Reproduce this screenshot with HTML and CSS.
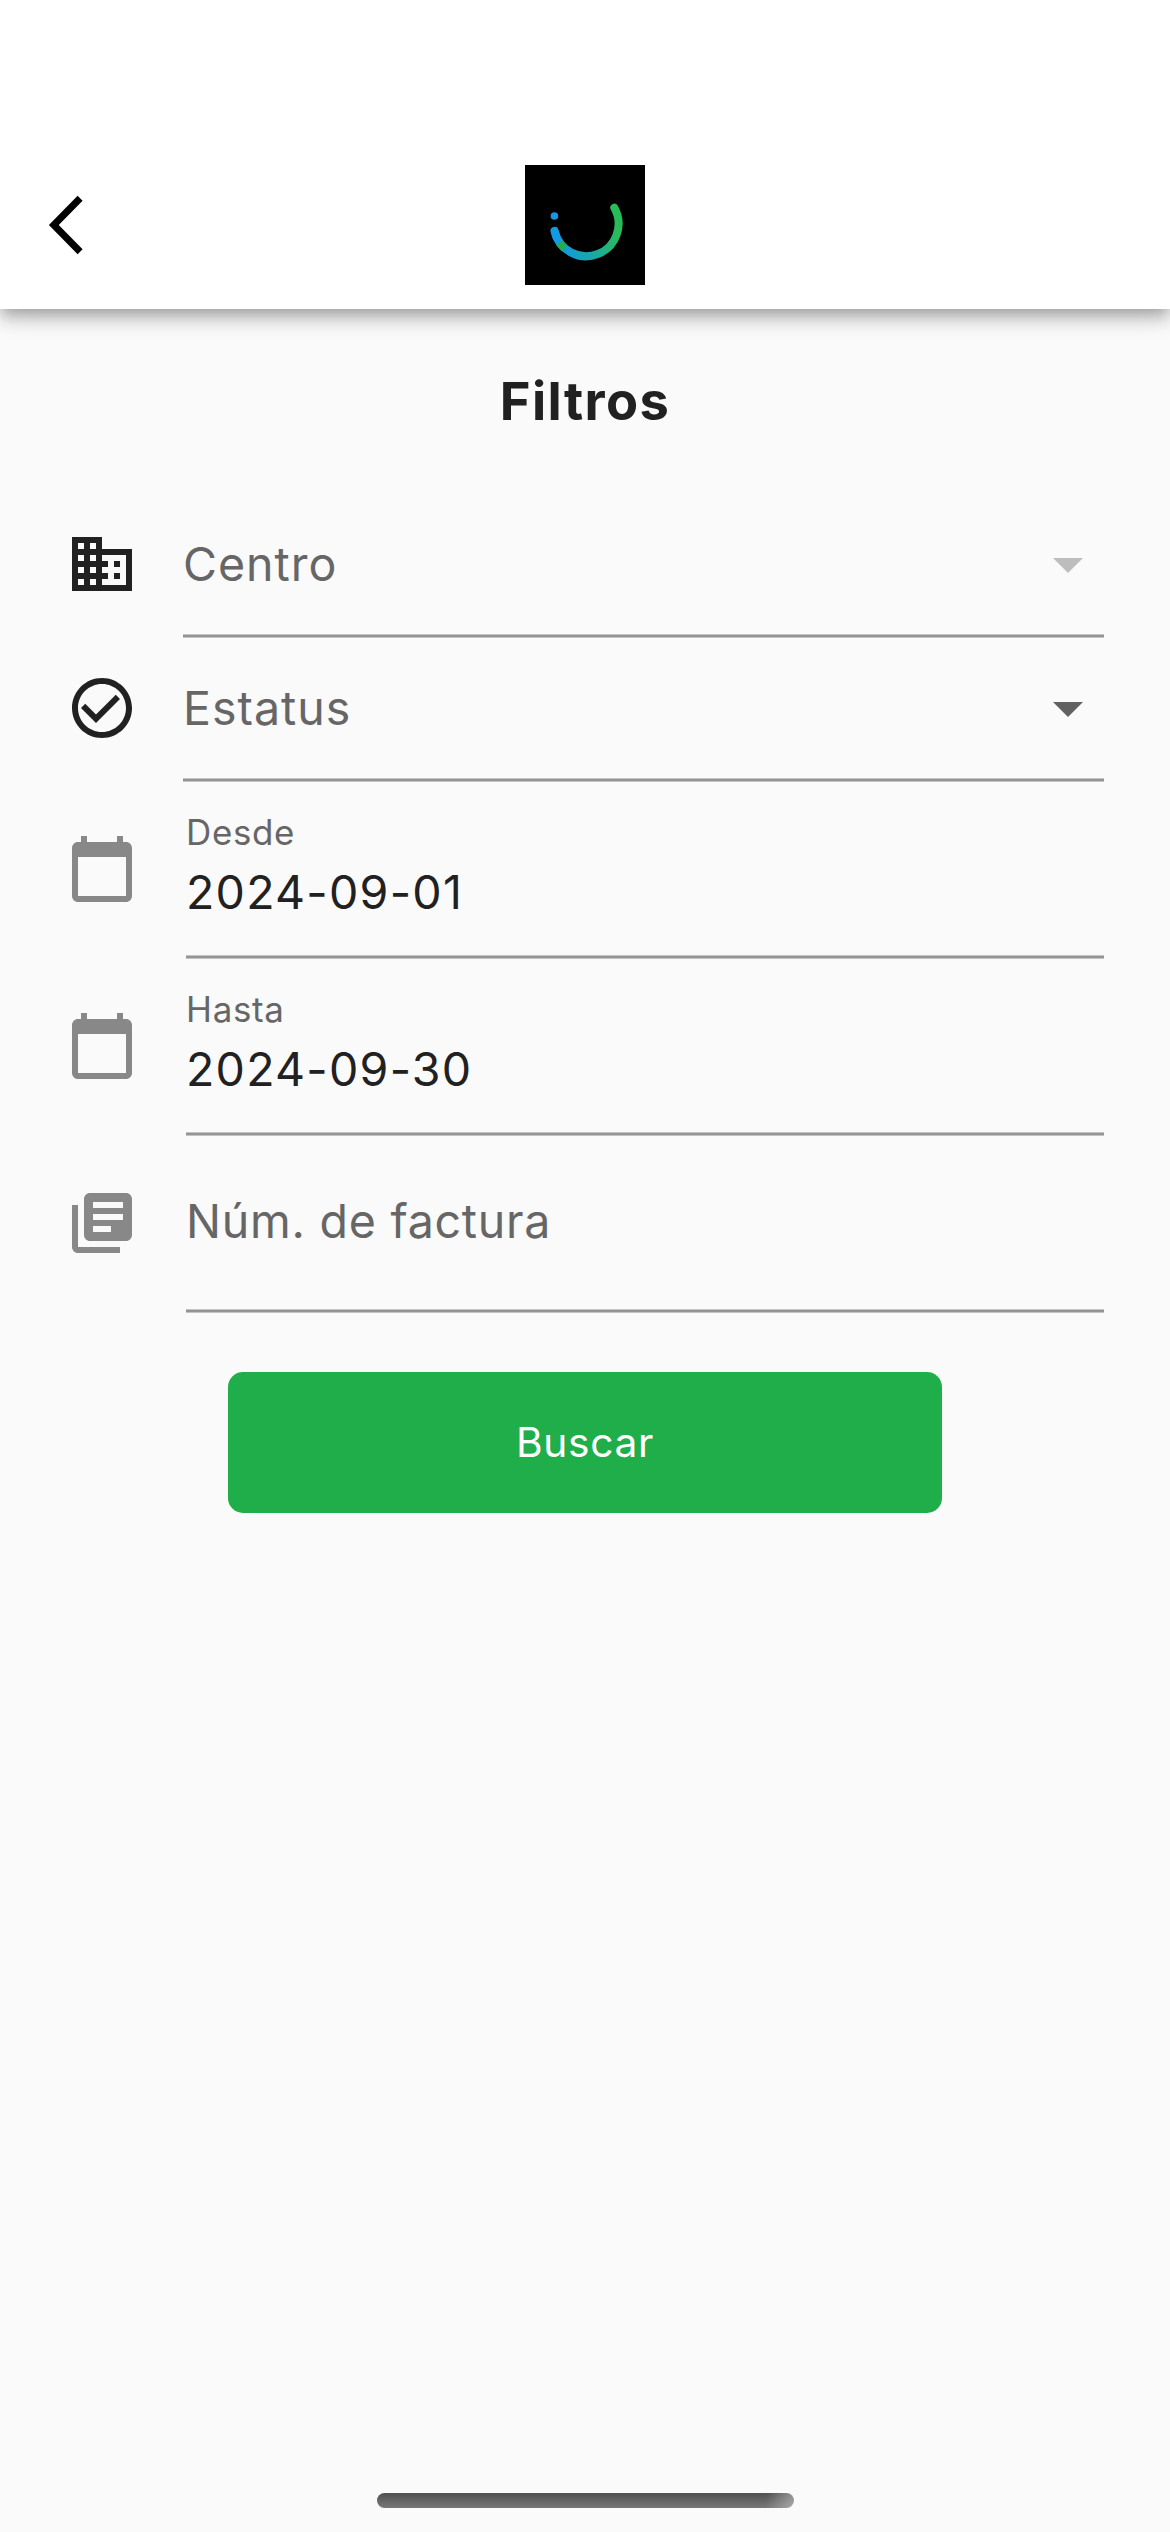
FILE: index.html
```html
<!DOCTYPE html>
<html lang="es">
<head>
<meta charset="utf-8">
<title>Filtros</title>
<link rel="stylesheet" href="styles.css">
</head>
<body>
<div class="screen">
  <header class="appbar">
    <button class="back" aria-label="Atrás">
      <svg width="40" height="64" viewBox="0 0 40 64"><path d="M35.100 5.200 8.800 32l26.300 26.800" fill="none" stroke="#000" stroke-width="7"/></svg>
    </button>
    <svg class="logo" viewBox="0 0 120 120">
      <defs>
        <linearGradient id="arc" gradientUnits="userSpaceOnUse" x1="38" y1="84" x2="93" y2="62">
          <stop offset="0" stop-color="#119bdc"/>
          <stop offset=".42" stop-color="#1aa8a6"/>
          <stop offset=".85" stop-color="#27b865"/>
          <stop offset="1" stop-color="#2abb59"/>
        </linearGradient>
      </defs>
      <rect width="120" height="120" fill="#000"/>
      <g fill="none" stroke-width="8" stroke-linecap="round">
        <path d="M29.500 65.800A32.400 32.400 0 1 0 89.300 42.800" stroke="url(#arc)"/>
        <path d="M29.500 65.800A32.400 32.400 0 0 0 35 78" stroke="#129be4" stroke-linecap="butt"/>
        <path d="M34.700 77.800A32.400 32.400 0 0 0 39.500 83.300" stroke="#24ad4f" stroke-linecap="butt"/>
      </g>
      <circle cx="29.400" cy="51" r="3.800" fill="#1596e6"/>
    </svg>
  </header>

  <main class="content">
    <h1 class="title">Filtros</h1>
    <form class="filters">
      <div class="row">
        <svg class="icon icon-dark" viewBox="0 0 24 24"><path d="M12 7V3H2v18h20V7H12zM6 19H4v-2h2v2zm0-4H4v-2h2v2zm0-4H4V9h2v2zm0-4H4V5h2v2zm4 12H8v-2h2v2zm0-4H8v-2h2v2zm0-4H8V9h2v2zm0-4H8V5h2v2zm10 12h-8v-2h2v-2h-2v-2h2v-2h-2V9h8v10zm-2-8h-2v2h2v-2zm0 4h-2v2h2v-2z"/></svg>
        <div class="field">
          <span class="hint">Centro</span>
          <svg class="caret caret-off" viewBox="0 0 24 24"><path d="M7 10l5 5 5-5z"/></svg>
        </div>
      </div>
      <div class="row">
        <svg class="icon icon-dark" viewBox="0 0 24 24"><path d="M16.59 7.58L10 14.17l-3.59-3.58L5 12l5 5 8-8zM12 2C6.48 2 2 6.48 2 12s4.48 10 10 10 10-4.48 10-10S17.52 2 12 2zm0 18c-4.42 0-8-3.58-8-8s3.58-8 8-8 8 3.58 8 8-3.58 8-8 8z"/></svg>
        <div class="field">
          <span class="hint">Estatus</span>
          <svg class="caret" viewBox="0 0 24 24"><path d="M7 10l5 5 5-5z"/></svg>
        </div>
      </div>
      <div class="row row-tall">
        <svg class="icon" viewBox="0 0 24 24"><path d="M20 3h-1V1h-2v2H7V1H5v2H4c-1.1 0-2 .9-2 2v16c0 1.100.9 2 2 2h16c1.100 0 2-.9 2-2V5c0-1.100-.9-2-2-2zm0 18H4V8h16v13z"/></svg>
        <div class="field">
          <span class="label">Desde</span>
          <span class="value">2024-09-01</span>
        </div>
      </div>
      <div class="row row-tall">
        <svg class="icon" viewBox="0 0 24 24"><path d="M20 3h-1V1h-2v2H7V1H5v2H4c-1.1 0-2 .9-2 2v16c0 1.100.9 2 2 2h16c1.100 0 2-.9 2-2V5c0-1.100-.9-2-2-2zm0 18H4V8h16v13z"/></svg>
        <div class="field">
          <span class="label">Hasta</span>
          <span class="value">2024-09-30</span>
        </div>
      </div>
      <div class="row row-tall">
        <svg class="icon" viewBox="0 0 24 24"><path d="M4 6H2v14c0 1.100.9 2 2 2h14v-2H4V6zm16-4H8c-1.100 0-2 .9-2 2v12c0 1.100.9 2 2 2h12c1.100 0 2-.9 2-2V4c0-1.100-.9-2-2-2zm-1 9H9V9h10v2zm-4 4H9v-2h6v2zm4-8H9V5h10v2z"/></svg>
        <div class="field field-empty">
          <span class="hint hint-long">Núm. de factura</span>
        </div>
      </div>
      <button class="submit" type="button">Buscar</button>
    </form>
  </main>
  <div class="home-indicator"></div>
</div>
</body>
</html>
```
FILE: styles.css
```css
* { box-sizing: border-box; }

body {
  margin: 0;
  background: #fafafa;
  color: #212121;
  font-family: Inter, "Liberation Sans", sans-serif;
}

button { border: 0; padding: 0; font: inherit; }

.screen {
  width: 1170px;
  height: 2532px;
  display: flex;
  flex-direction: column;
  overflow: hidden;
}

.appbar {
  height: 309px;
  padding: 165px 45px 24px;
  display: grid;
  grid-template-columns: 1fr 120px 1fr;
  align-items: center;
  background: #fff;
  box-shadow: 0 6px 12px -3px rgba(0, 0, 0, .2), 0 12px 15px rgba(0, 0, 0, .14), 0 3px 30px rgba(0, 0, 0, .12);
}

.back { width: 40px; height: 64px; background: none; }
.back svg, .logo { display: block; }
.logo { width: 120px; height: 120px; }

.content { flex: 1; padding: 60px 66px 0; }

.title {
  margin: 0 0 61px;
  font-size: 52.4px;
  line-height: 64px;
  font-weight: 700;
  letter-spacing: 1.4px;
  text-align: center;
}

.filters { display: flex; flex-direction: column; }

.row { display: flex; height: 144px; gap: 45px; }
.row-tall { height: 177px; gap: 48px; }

.icon { width: 72px; height: 72px; margin-top: 34px; fill: #888; flex: none; }
.icon-dark { fill: #212121; }
.row-tall .icon { margin-top: 51px; }

.field {
  flex: 1;
  display: flex;
  justify-content: space-between;
  padding-top: 42px;
  background: linear-gradient(#c2c3c2 1px, #939493 1px 3px, #c2c3c2 3px) bottom / 100% 4px no-repeat;
}
.row-tall .field { flex-direction: column; justify-content: flex-start; padding-top: 29px; gap: 11px; }
.row-tall .field-empty { padding-top: 57px; }

.hint, .value { font-size: 46.5px; line-height: 56px; white-space: nowrap; }
.hint { color: #666; letter-spacing: 1px; }
.hint-long { letter-spacing: .75px; }
.value { letter-spacing: 1.25px; }
.label { font-size: 34.9px; line-height: 42px; color: #666; letter-spacing: .7px; }

.caret { width: 72px; height: 72px; margin-top: -8px; fill: #616161; }
.caret-off { fill: #bdbdbd; }

.submit {
  align-self: center;
  width: 714px;
  height: 141px;
  margin-top: 59.4px;
  border-radius: 15px;
  background: #20ae4b;
  color: #fff;
  font-size: 40.7px;
  letter-spacing: .65px;
}

.home-indicator {
  align-self: center;
  width: 417px;
  height: 15px;
  margin: 0 0 24px 1px;
  border-radius: 7.5px;
  background:
    linear-gradient(100deg, transparent 93%, rgba(200, 200, 200, .6)),
    linear-gradient(#505050, #787878);
}
```
